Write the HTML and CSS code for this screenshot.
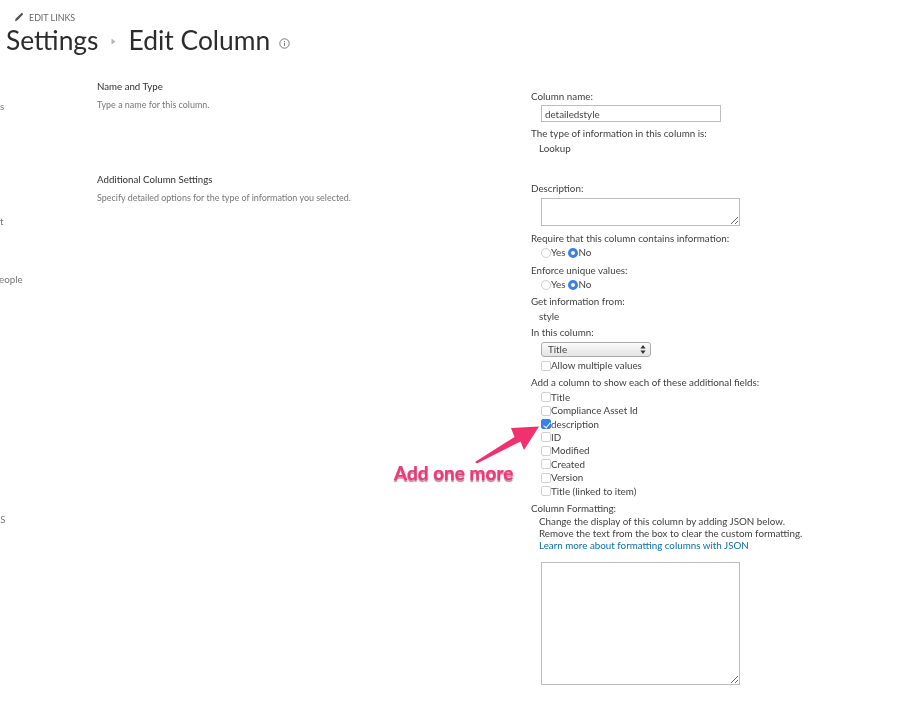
FILE: index.html
```html
<!DOCTYPE html>
<html lang="en">
<head>
<meta charset="utf-8">
<title>Settings - Edit Column</title>
<link rel="stylesheet" href="styles.css">
</head>
<body>
<header class="top">
  <div class="edit-links">
    <svg class="pencil" width="10" height="10" viewBox="0 0 10 10"><path d="M1 9.200 1.600 6.800 7.200 1.200a.9.9 0 0 1 1.300 0l.3.3a.9.9 0 0 1 0 1.300L3.200 8.400z" fill="#555"/></svg>
    <span>EDIT LINKS</span>
  </div>
  <h1 class="title">
    <span>Settings</span>
    <svg class="crumb" width="5" height="7" viewBox="0 0 5 7"><path d="M0.500 0.500 4.500 3.500 0.500 6.500z" fill="#b5b5b5"/></svg>
    <span>Edit Column</span>
    <svg class="info" width="11" height="11" viewBox="0 0 11 11"><circle cx="5.500" cy="5.500" r="4.700" fill="none" stroke="#777" stroke-width="1"/><path d="M5.500 4.800v3.100M5.500 3v1" stroke="#777" stroke-width="1"/></svg>
  </h1>
</header>
<main class="content">
  <nav class="nav">
    <div class="nav-s">s</div>
    <div class="nav-t">t</div>
    <div class="nav-p">eople</div>
    <div class="nav-k">KS</div>
  </nav>
  <section class="info-col">
    <h2 class="sec-title">Name and Type</h2>
    <p class="sec-desc">Type a name for this column.</p>
    <h2 class="sec-title sec-two">Additional Column Settings</h2>
    <p class="sec-desc">Specify detailed options for the type of information you selected.</p>
  </section>
  <form class="fields">
    <div class="row first">Column name:</div>
    <input class="text-input" type="text" value="detailedstyle">
    <div class="row mt4">The type of information in this column is:</div>
    <div class="row sub mt1">Lookup</div>
    <div class="row mt26">Description:</div>
    <textarea class="area area-short"></textarea>
    <div class="row mt5">Require that this column contains information:</div>
    <div class="row choice mt1"><input class="radio" type="radio" name="req">Yes<input class="radio" type="radio" name="req" checked>No</div>
    <div class="row mt3">Enforce unique values:</div>
    <div class="row choice mt1"><input class="radio" type="radio" name="uniq">Yes<input class="radio" type="radio" name="uniq" checked>No</div>
    <div class="row mt2">Get information from:</div>
    <div class="row sub mt1">style</div>
    <div class="row mt2">In this column:</div>
    <div class="select-wrap">
      <select class="select"><option>Title</option></select>
      <svg class="select-arrows" width="6" height="9" viewBox="0 0 6 9"><path d="M3 0 5.600 3.400H.4zM3 9 .4 5.600h5.200z" fill="#333"/></svg>
    </div>
    <div class="row choice mt2"><input class="check" type="checkbox">Allow multiple values</div>
    <div class="row mt2">Add a column to show each of these additional fields:</div>
    <div class="checks">
      <div class="choice"><input class="check" type="checkbox">Title</div>
      <div class="choice"><input class="check" type="checkbox">Compliance Asset Id</div>
      <div class="choice"><input class="check" type="checkbox" checked>description</div>
      <div class="choice"><input class="check" type="checkbox">ID</div>
      <div class="choice"><input class="check" type="checkbox">Modified</div>
      <div class="choice"><input class="check" type="checkbox">Created</div>
      <div class="choice"><input class="check" type="checkbox">Version</div>
      <div class="choice"><input class="check" type="checkbox">Title (linked to item)</div>
    </div>
    <div class="row mt3">Column Formatting:</div>
    <div class="help">
      Change the display of this column by adding JSON below.<br>
      Remove the text from the box to clear the custom formatting.<br>
      <a class="link" href="#">Learn more about formatting columns with JSON</a>
    </div>
    <textarea class="area area-tall"></textarea>
  </form>
</main>
<svg class="arrow" width="70" height="44" viewBox="470 422 70 44"><path d="M475 462 514.500 437 511 428 539 426.500 524 450 520.500 441.500 477 463.500z" fill="#f1316f"/></svg>
<div class="callout">Add one more</div>
</body>
</html>
```
FILE: styles.css
```css
* { box-sizing: border-box; }
html, body { margin: 0; height: 714px; overflow: hidden; }
body {
  position: relative;
  background: #fff;
  color: #3f3f3f;
  font-family: "Lato", "Noto Sans", sans-serif;
  font-size: 9.800px;
  filter: blur(0.35px);
}
.top { height: 88px; padding-top: 12px; }
.edit-links { display: flex; align-items: center; gap: 5px; height: 11px; padding-left: 14px; font-size: 8.900px; color: #666; }
.pencil { margin-top: -2px; }
.title { display: flex; align-items: center; height: 34px; margin: 0; padding-left: 6px; font-size: 26.400px; font-weight: 400; color: #2c2c2c; line-height: 34px; }
.crumb { margin: 2px 13px 0 12px; }
.info { margin: 6px 0 0 9px; }
.content { display: flex; }
.nav { width: 97px; flex: none; color: #777; line-height: 14px; }
.nav-s { margin-top: 11px; }
.nav-t { margin-top: 101px; }
.nav-p { margin-top: 44px; margin-left: -1px; }
.nav-k { margin-top: 227px; font-size: 9.500px; margin-left: -6px; }
.info-col { width: 434px; flex: none; margin-top: -9px; }
.sec-title { margin: 0; font-size: 9.700px; font-weight: 400; line-height: 14px; color: #2f2f2f; }
.sec-desc { margin: 5px 0 0; font-size: 8.950px; line-height: 14px; color: #777; }
.sec-two { margin-top: 60px; }
.fields { display: flex; flex-direction: column; align-items: flex-start; width: 330px; }
.row { height: 14px; line-height: 14px; white-space: nowrap; }
.first { margin-top: 1px; }
.sub { padding-left: 8px; }
.mt1 { margin-top: 1px; }
.mt2 { margin-top: 2px; }
.mt3 { margin-top: 3px; }
.mt4 { margin-top: 3.800px; }
.mt5 { margin-top: 5px; }
.mt26 { margin-top: 26px; }
.text-input {
  width: 180px; height: 17px; margin: 2px 0 0 10px; padding: 0 3px;
  border: 1px solid #bdbdbd; border-radius: 0; outline: none;
  font: inherit; color: #444; background: #fff;
}
.area {
  display: block; width: 199px; margin-left: 10px; padding: 2px;
  border: 1px solid #bdbdbd; border-radius: 0; background: #fff; font: inherit;
}
.area-short { height: 28px; margin-top: 3px; }
.area-tall { height: 123px; margin-top: 11px; }
.choice { display: flex; align-items: center; padding-left: 10px; line-height: 13px; white-space: nowrap; }
.row.choice { height: 14px; }
.radio, .check {
  appearance: none; flex: none; width: 10px; height: 10px; margin: 0;
  border: 1px solid #cfcfcf; background: #fff;
}
.radio { border-radius: 50%; }
.radio:checked { border: 3px solid #3d80e3; background: #fff; margin-left: 3px; }
.check { border-radius: 2px; }
.check:checked {
  position: relative; border-color: #3d80e3; background: #3d80e3;
}
.check:checked::after {
  content: ""; position: absolute; left: 2.500px; top: 0.500px; width: 3px; height: 6px;
  border: solid #fff; border-width: 0 1px 1px 0; transform: rotate(40deg);
}
.select-wrap { position: relative; width: 110px; height: 15px; margin: 3px 0 0 10px; }
.select {
  appearance: none; display: block; width: 100%; height: 100%; padding: 0 6px;
  border: 1px solid #aaa; border-radius: 3px; outline: none;
  background: linear-gradient(#fbfbfb, #e4e4e4); font: inherit; color: #444;
}
.select-arrows { position: absolute; right: 5px; top: 3px; pointer-events: none; }
.checks { display: grid; grid-auto-rows: 13.400px; margin-top: 1.800px; }
.help { padding-left: 8px; line-height: 12px; white-space: nowrap; }
.link { color: #0f6ea5; text-decoration: none; }
.arrow { position: absolute; left: 470px; top: 422px; }
.callout {
  position: absolute; left: 394px; top: 462px;
  font-family: "Lato", "Liberation Sans", sans-serif; font-size: 19px; font-weight: 700; line-height: 22px;
  color: #ec3a76; white-space: nowrap;
  -webkit-text-stroke: 0.25px #ec3a76;
  text-shadow: 0 1.500px 1px rgba(150, 30, 70, 0.55);
}
```
